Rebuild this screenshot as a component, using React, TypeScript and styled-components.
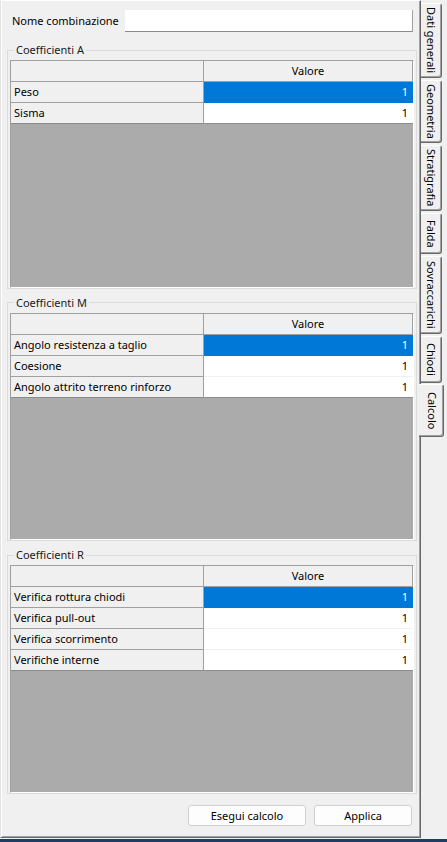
import React from "react";
import styled, { createGlobalStyle } from "styled-components";

const GlobalStyle = createGlobalStyle`
  html, body { margin: 0; padding: 0; background: #f0f0f0; }
  body {
    font-family: "Noto Sans", "Segoe UI", sans-serif;
    font-size: 11px;
    color: #000;
  }
  *, *::before, *::after { box-sizing: border-box; }
`;

const Window = styled.div`
  width: 447px;
  height: 842px;
  display: flex;
  flex-direction: column;
  background: #f0f0f0;
  overflow: hidden;
`;

const Body = styled.div`
  display: flex;
  height: 838px;
`;

const TaskStrip = styled.div`
  margin-top: 1px;
  height: 3px;
  background: #1e3d65;
`;

const Page = styled.div`
  width: 421px;
  height: 838px;
  flex: none;
  display: flex;
  flex-direction: column;
  border-left: 1px solid #e3e3e3;
  border-top: 1px solid #ffffff;
  border-right: 1px solid #696969;
  border-bottom: 1px solid #696969;
  box-shadow: inset 1px 0 0 #ffffff, inset -1px -1px 0 #a0a0a0;
  padding: 9px 3px 11px 6px;
`;

const NameRow = styled.div`
  display: flex;
  align-items: center;
  height: 22px;
  padding: 0 4px 0 5px;
  flex: none;
`;

const NameLabel = styled.label`
  flex: 1;
  line-height: 14px;
`;

const NameInput = styled.input`
  width: 288px;
  height: 22px;
  border: none;
  border-right: 1px solid #a0a0a0;
  border-bottom: 1px solid #8a8a8a;
  background: #ffffff;
  font: inherit;
  padding: 0 3px;
  outline: none;
`;

const Groups = styled.div`
  flex: 1;
  display: flex;
  flex-direction: column;
  gap: 7px;
  margin-top: 11px;
  min-height: 0;
`;

const Group = styled.fieldset`
  flex: 1;
  min-height: 0;
  min-width: 0;
  margin: 0;
  display: flex;
  flex-direction: column;
  border: 1px solid #dcdcdc;
  padding: 3px 2px 0 2px;
`;

const Caption = styled.legend`
  margin-left: 4px;
  padding: 0 2px;
  line-height: 14px;
  color: #1a1a1a;
`;

const Table = styled.div`
  flex: 1;
  display: flex;
  flex-direction: column;
  background: #ababab;
  border-top: 1px solid #a0a0a0;
  border-left: 1px solid #a0a0a0;
  border-right: 1px solid #ffffff;
  border-bottom: 1px solid #ffffff;
`;

const Row = styled.div`
  display: grid;
  grid-template-columns: 193px 1fr;
  height: 21px;
`;

const HeadCell = styled.div`
  background: #f0f0f0;
  border-right: 1px solid #a0a0a0;
  border-bottom: 1px solid #a0a0a0;
  display: flex;
  align-items: center;
  justify-content: center;
  line-height: 20px;
`;

const RowHead = styled.div<{ $last: boolean }>`
  background: #f0f0f0;
  border-right: 1px solid #a0a0a0;
  border-bottom: 1px solid ${(p) => (p.$last ? "#8c8c8c" : "#a0a0a0")};
  padding-left: 3px;
  line-height: 20px;
  white-space: nowrap;
  overflow: hidden;
`;

const ValueCell = styled.div<{ $selected: boolean; $last: boolean }>`
  background: ${(p) => (p.$selected ? "#0078d7" : "#ffffff")};
  color: ${(p) => (p.$selected ? "#ffffff" : "#000000")};
  border-bottom: 1px solid
    ${(p) => (p.$last ? "#8c8c8c" : p.$selected ? "#0078d7" : "#f0f0f0")};
  text-align: right;
  padding-right: 5px;
  line-height: 20px;
`;

const ButtonRow = styled.div`
  display: flex;
  justify-content: flex-end;
  gap: 8px;
  padding-right: 5px;
  margin-top: 11px;
  flex: none;
`;

const Button = styled.button<{ $width: number }>`
  width: ${(p) => p.$width}px;
  height: 21px;
  background: #fdfdfd;
  border: 1px solid #d0d0d0;
  border-radius: 3px;
  font: inherit;
  color: #000;
  padding: 0;
  line-height: 19px;
`;

const TabStrip = styled.div`
  display: flex;
  flex-direction: column;
  gap: 2px;
  padding-top: 3px;
  width: 26px;
`;

const Tab = styled.div<{ $active: boolean; $length: number }>`
  display: flex;
  align-items: center;
  justify-content: center;
  flex: none;
  height: ${(p) => p.$length}px;
  width: ${(p) => (p.$active ? 25 : 21)}px;
  margin: ${(p) => (p.$active ? "-1px 0 0 -2px" : "0")};
  padding-left: ${(p) => (p.$active ? 2 : 0)}px;
  background: #f0f0f0;
  border-top: 1px solid #ffffff;
  border-right: 1px solid #696969;
  border-bottom: 1px solid #696969;
  border-radius: 0 3px 3px 0;
  box-shadow: inset -1px -1px 0 #a0a0a0;
  z-index: ${(p) => (p.$active ? 1 : 0)};
`;

const TabLabel = styled.span`
  writing-mode: vertical-rl;
  line-height: 18px;
  white-space: nowrap;
`;

const tabs = [
  { label: "Dati generali", length: 75 },
  { label: "Geometria", length: 63 },
  { label: "Stratigrafia", length: 66 },
  { label: "Falda", length: 41 },
  { label: "Sovraccarichi", length: 78 },
  { label: "Chiodi", length: 47 },
  { label: "Calcolo", length: 53 },
];

const groups = [
  { title: "Coefficienti A", rows: ["Peso", "Sisma"] },
  {
    title: "Coefficienti M",
    rows: [
      "Angolo resistenza a taglio",
      "Coesione",
      "Angolo attrito terreno rinforzo",
    ],
  },
  {
    title: "Coefficienti R",
    rows: [
      "Verifica rottura chiodi",
      "Verifica pull-out",
      "Verifica scorrimento",
      "Verifiche interne",
    ],
  },
];

export default function App() {
  return (
    <>
      <GlobalStyle />
      <Window>
        <Body>
          <Page>
            <NameRow>
              <NameLabel htmlFor="nome">Nome combinazione</NameLabel>
              <NameInput id="nome" defaultValue="" />
            </NameRow>
            <Groups>
              {groups.map((g) => (
                <Group key={g.title}>
                  <Caption>{g.title}</Caption>
                  <Table>
                    <Row>
                      <HeadCell />
                      <HeadCell>Valore</HeadCell>
                    </Row>
                    {g.rows.map((r, i) => {
                      const last = i === g.rows.length - 1;
                      return (
                        <Row key={r}>
                          <RowHead $last={last}>{r}</RowHead>
                          <ValueCell $selected={i === 0} $last={last}>
                            1
                          </ValueCell>
                        </Row>
                      );
                    })}
                  </Table>
                </Group>
              ))}
            </Groups>
            <ButtonRow>
              <Button $width={118}>Esegui calcolo</Button>
              <Button $width={98}>Applica</Button>
            </ButtonRow>
          </Page>
          <TabStrip>
            {tabs.map((t) => (
              <Tab
                key={t.label}
                $active={t.label === "Calcolo"}
                $length={t.length}
              >
                <TabLabel>{t.label}</TabLabel>
              </Tab>
            ))}
          </TabStrip>
        </Body>
        <TaskStrip />
      </Window>
    </>
  );
}
